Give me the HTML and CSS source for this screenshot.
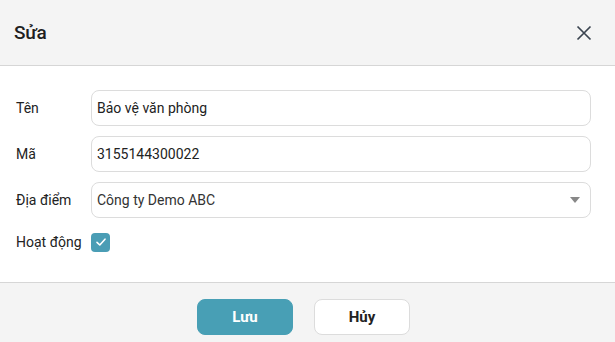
FILE: index.html
```html
<!DOCTYPE html>
<html lang="vi">
<head>
    <meta charset="UTF-8">
    <meta name="viewport" content="width=device-width, initial-scale=1.0">
    <title>Sửa</title>
    <link rel="stylesheet" href="styles.css">
</head>
<body>

<div class="dialog">
    <div class="dialog-header">
        <h2 class="dialog-title">Sửa</h2>
        <button class="close-btn" type="button" aria-label="Đóng">
            <svg width="16" height="16" viewBox="0 0 16 16">
                <path d="M1.5 1.5 L14.5 14.5 M14.5 1.5 L1.5 14.5" stroke="#3b4450" stroke-width="1.7" fill="none"/>
            </svg>
        </button>
    </div>

    <div class="dialog-body">
        <div class="form-row">
            <label class="form-label">Tên</label>
            <div class="form-input">Bảo vệ văn phòng</div>
        </div>
        <div class="form-row">
            <label class="form-label">Mã</label>
            <div class="form-input">3155144300022</div>
        </div>
        <div class="form-row">
            <label class="form-label">Địa điểm</label>
            <div class="form-input form-select">
                <span>Công ty Demo ABC</span>
                <span class="select-arrow"></span>
            </div>
        </div>
        <div class="form-row form-row-check">
            <label class="form-label">Hoạt động</label>
            <span class="checkbox">
                <svg width="12" height="12" viewBox="0 0 12 12">
                    <path d="M2 6.3 L4.8 9 L10 3.2" stroke="#fff" stroke-width="1.6" fill="none" stroke-linecap="round" stroke-linejoin="round"/>
                </svg>
            </span>
        </div>
    </div>

    <div class="dialog-footer">
        <button class="btn btn-primary" type="button">Lưu</button>
        <button class="btn btn-default" type="button">Hủy</button>
    </div>
</div>

</body>
</html>
```

FILE: styles.css
```css
* {
    box-sizing: border-box;
}
body {
    margin: 0;
    font-family: Roboto, "Liberation Sans", sans-serif;
    color: #222;
    background-color: #fff;
}
.dialog {
    width: 615px;
    height: 342px;
    display: flex;
    flex-direction: column;
}
.dialog-header {
    height: 66px;
    background-color: #f4f4f4;
    border-bottom: 1px solid #d6d6d6;
    display: flex;
    align-items: center;
    justify-content: space-between;
    padding: 0 23px 0 14px;
}
.dialog-title {
    margin: 0;
    font-size: 19px;
    font-weight: 500;
    color: #1f1f1f;
    letter-spacing: -0.3px;
}
.close-btn {
    border: none;
    background: none;
    padding: 0;
    width: 16px;
    height: 16px;
    cursor: pointer;
}
.dialog-body {
    height: 216px;
    padding: 24px 24px 0 16px;
    display: flex;
    flex-direction: column;
    gap: 10px;
}
.form-row {
    display: flex;
    align-items: center;
}
.form-label {
    width: 75px;
    font-size: 14px;
    color: #222;
}
.form-input {
    flex: 1;
    height: 36px;
    border: 1px solid #dcdcdc;
    border-radius: 8px;
    padding: 0 5px;
    font-size: 14px;
    display: flex;
    align-items: center;
    color: #222;
}
.form-select {
    justify-content: space-between;
    padding-right: 10px;
    color: #333;
}
.select-arrow {
    width: 0;
    height: 0;
    border-left: 5px solid transparent;
    border-right: 5px solid transparent;
    border-top: 6px solid #888;
}
.form-row-check {
    height: 28px;
}
.checkbox {
    width: 19px;
    height: 19px;
    border-radius: 4px;
    background-color: #4a9db5;
    display: flex;
    align-items: center;
    justify-content: center;
}
.dialog-footer {
    flex: 1;
    background-color: #f4f4f4;
    border-top: 1px solid #d6d6d6;
    display: flex;
    justify-content: center;
    align-items: flex-start;
    gap: 21px;
    padding: 16px 8px 0 0;
}
.btn {
    width: 96px;
    height: 36px;
    border-radius: 8px;
    font-family: Roboto, "Liberation Sans", sans-serif;
    font-size: 15px;
    font-weight: 700;
    cursor: pointer;
}
.btn-primary {
    background-color: #489fb5;
    border: 1px solid #489fb5;
    color: #fff;
}
.btn-default {
    background-color: #fff;
    border: 1px solid #dcdcdc;
    color: #222;
}
```
